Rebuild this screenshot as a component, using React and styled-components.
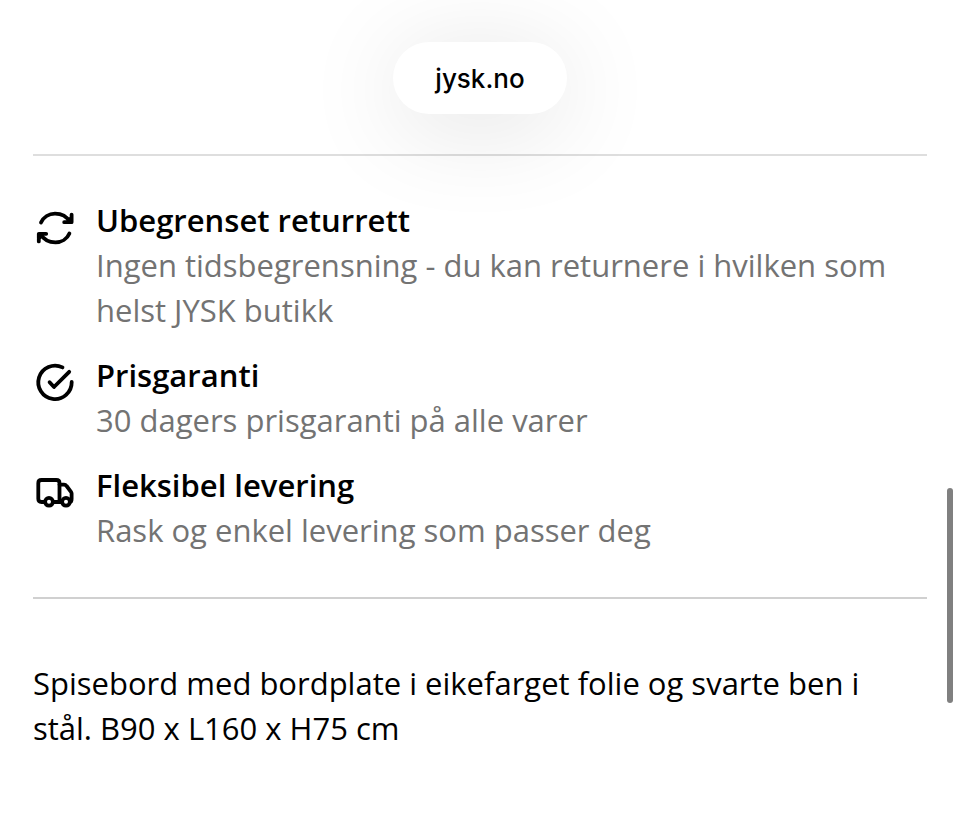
import React from 'react'
import styled, { createGlobalStyle } from 'styled-components'

const services = [
  {
    title: 'Ubegrenset returrett',
    text: 'Ingen tidsbegrensning - du kan returnere i hvilken som helst JYSK butikk',
    icon: (
      <>
        <path d="M8 16.5C10.5 11 16 7.6 22 7.6C28.5 7.6 34 10.8 37 16" />
        <path d="M38.6 8.6V16.2H31.2M38.6 11.6L34.4 16" />
        <path d="M36.4 27.4C34 33 28.5 36.4 22.5 36.4C16 36.4 10.5 33.2 7.4 28" />
        <path d="M5.8 35.4V27.8H13.2M5.8 32.4L10 28" />
      </>
    ),
  },
  {
    title: 'Prisgaranti',
    text: '30 dagers prisgaranti på alle varer',
    icon: (
      <>
        <path d="M29.5 6.4A16.7 16.7 0 1 0 38.7 21" />
        <path d="M16.6 21.2L21 26L36.2 10.8" />
      </>
    ),
  },
  {
    title: 'Fleksibel levering',
    text: 'Rask og enkel levering som passer deg',
    icon: (
      <>
        <path d="M11.8 31H8.5Q5.3 31 5.3 27.8V12.2Q5.3 9 8.5 9H23.3Q26.5 9 26.5 12.2V31H20.2" />
        <path d="M26.5 13.6H31Q32.6 13.6 33.6 15L38 20.8Q38.6 21.6 38.6 22.6V28Q38.6 31 36.8 31" />
        <path d="M26.5 31H29" />
        <circle cx="16" cy="30.8" r="3.9" />
        <circle cx="33" cy="30.8" r="3.9" />
      </>
    ),
  },
]

function App() {
  return (
    <>
      <GlobalStyle />
      <Page>
        <Header>
          <SiteLink href="#">jysk.no</SiteLink>
        </Header>
        <Services>
          {services.map(({ title, text, icon }) => (
            <Service key={title}>
              <Icon viewBox="0 0 44 44" aria-hidden="true">{icon}</Icon>
              <div>
                <Title>{title}</Title>
                <Text>{text}</Text>
              </div>
            </Service>
          ))}
        </Services>
        <Description>
          Spisebord med bordplate i eikefarget folie og svarte ben i stål. B90 x L160 x H75 cm
        </Description>
      </Page>
      <ScrollThumb />
    </>
  )
}

export default App

const GlobalStyle = createGlobalStyle`
  * {
    box-sizing: border-box;
  }
  body {
    margin: 0;
    background: #fff;
    color: #000;
    font-family: "Open Sans", sans-serif;
    font-size: 31px;
    line-height: 45px;
  }
`
const Page = styled.main`
  padding: 42px 33px 68px;
`
const Header = styled.header`
  display: flex;
  justify-content: center;
  padding-bottom: 40px;
`
const SiteLink = styled.a`
  padding: 15px 42px 13px;
  border-radius: 36px;
  background: #fff;
  box-shadow: 0 12px 100px rgba(0, 0, 0, 0.12);
  color: #000;
  font-family: Inter, sans-serif;
  font-size: 26px;
  font-weight: 500;
  line-height: 44px;
  text-decoration: none;
`
const Services = styled.ul`
  display: flex;
  flex-direction: column;
  gap: 20px;
  margin: 0;
  padding: 42px 0 44px;
  border-top: 2px solid #dedede;
  border-bottom: 2px solid #d0d0d0;
  list-style: none;
`
const Service = styled.li`
  display: flex;
  gap: 19px;
`
const Icon = styled.svg`
  flex: none;
  width: 44px;
  height: 44px;
  margin-top: 8px;
  fill: none;
  stroke: #000;
  stroke-width: 3.8;
  stroke-linecap: round;
  stroke-linejoin: round;
`
const Title = styled.h2`
  margin: 0;
  font-size: 31px;
  font-weight: 600;
`
const Text = styled.p`
  margin: 0;
  color: #737373;
`
const Description = styled.p`
  margin: 62px 0 0;
  padding-right: 24px;
`
const ScrollThumb = styled.div`
  position: fixed;
  top: 488px;
  right: 7px;
  width: 6px;
  height: 215px;
  border-radius: 3px;
  background: #808080;
`
